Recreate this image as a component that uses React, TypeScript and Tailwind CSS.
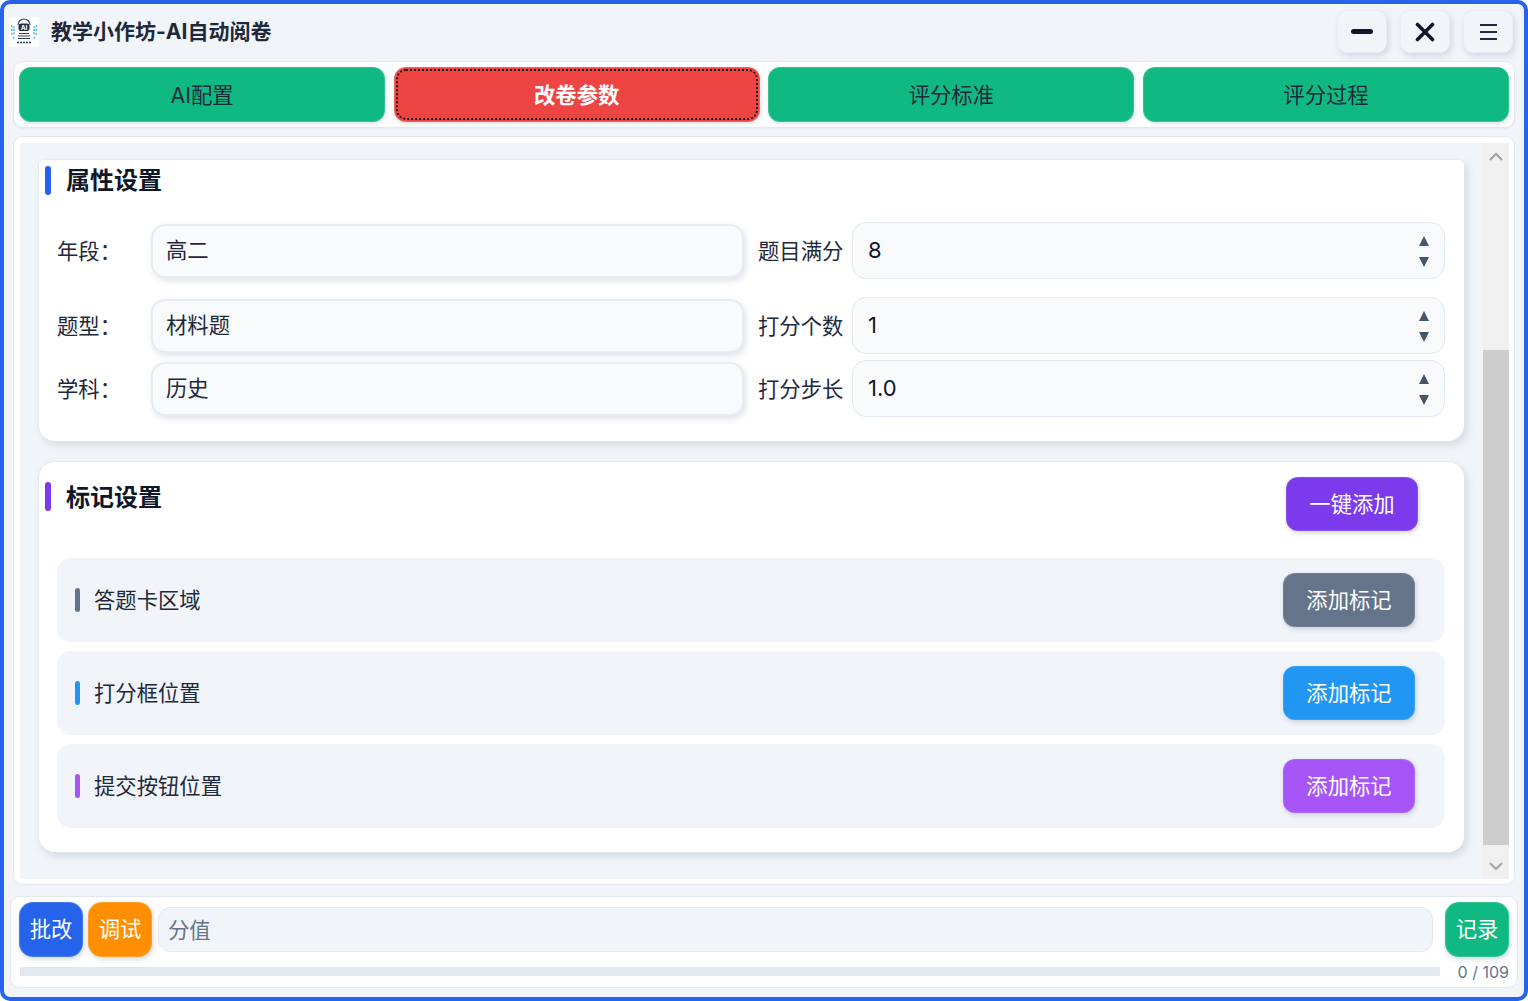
import React from "react";

const font = { fontFamily: 'Inter, "Noto Sans CJK SC", sans-serif' };

function Logo() {
  return (
    <svg width="30" height="30" viewBox="0 0 30 30" className="shrink-0 bg-white">
      <path d="M9 8a6 6 0 0 1 12 0" fill="none" stroke="#334766" strokeWidth="1.2" />
      <rect x="9.5" y="6.5" width="11" height="7.5" rx="2.5" fill="#1e2f4d" />
      <text x="15" y="12.6" textAnchor="middle" fontSize="6.5" fontWeight="700" fill="#fff" fontFamily="Inter">AI</text>
      <path d="M10 16.5h10M9 19h12M9 21.5h12" stroke="#2b3f60" strokeWidth="1.2" />
      <path d="M8 25.5h14" stroke="#2b3f60" strokeWidth="1.4" strokeDasharray="2 1" />
      <path d="M2 9l4 2M2 13h4M2 17l4-1M28 9l-4 2M28 13h-4M28 17l-4-1M4 21l2-1M26 21l-2-1" stroke="#39b7ee" strokeWidth="1.8" strokeDasharray="1.5 0.8" />
    </svg>
  );
}

function TopButton({ children }: { children: React.ReactNode }) {
  return (
    <div className="flex h-[43px] w-[50px] items-center justify-center rounded-[10px] border border-[#e8edf4] bg-[#f1f5f9] shadow-[2px_3px_6px_rgba(100,116,139,0.22)]">
      {children}
    </div>
  );
}

function Tab({ label, active }: { label: string; active?: boolean }) {
  return active ? (
    <div className="flex h-[55px] items-center justify-center rounded-[12px] border border-white/15 bg-[#ef4444] pt-[2px] text-[21.33px] font-bold text-white outline-2 -outline-offset-4 outline-dotted outline-[#1c1010] shadow-[1px_2px_4px_rgba(100,116,139,0.2)]">
      {label}
    </div>
  ) : (
    <div className="flex h-[55px] items-center justify-center rounded-[12px] border border-white/15 bg-[#10b981] pt-[2px] text-[21.33px] text-[#1e293b] shadow-[1px_2px_4px_rgba(100,116,139,0.2)]">
      {label}
    </div>
  );
}

function Spin() {
  return (
    <svg width="12" height="33" viewBox="0 0 12 33" className="mr-[14px] mt-[1px] shrink-0">
      <path d="M1 11 L6 1 L11 11Z M1 22 L11 22 L6 32Z" fill="#475569" />
    </svg>
  );
}

function Field({ label, value, numLabel, num, top }: { label: string; value: string; numLabel: string; num: string; top: string }) {
  return (
    <div className={`flex items-center ${top}`}>
      <div className="w-[94px] shrink-0 pt-[2px] text-[21.33px] text-[#1e293b]">{label}：</div>
      <div className="flex h-[54px] w-[593px] shrink-0 items-center rounded-[14px] border-2 border-[#e7ecf3] bg-[#f8fafc] pl-[13px] text-[21.33px] text-[#1e293b] shadow-[2px_3px_6px_rgba(100,116,139,0.2)]">
        {value}
      </div>
      <div className="ml-[14px] w-[94px] shrink-0 pt-[2px] text-[21.33px] text-[#1e293b]">{numLabel}</div>
      <div className="flex h-[57px] flex-1 items-center justify-between rounded-[14px] border border-[#e2e8f0] bg-[#f8fafc] pl-[15px] text-[22px] text-[#0f172a]">
        <span>{num}</span>
        <Spin />
      </div>
    </div>
  );
}

function MarkRow({ label, bar, btn }: { label: string; bar: string; btn: string }) {
  return (
    <div className="flex h-[84px] items-center rounded-[14px] bg-[#f1f5f9] pl-[18px] pr-[30px]">
      <div className={`h-[24px] w-[5px] rounded-full ${bar}`} />
      <div className="ml-[14px] flex-1 pt-[2px] text-[21.33px] text-[#1e293b]">{label}</div>
      <div className={`flex h-[54px] w-[132px] items-center justify-center rounded-[12px] border border-white/10 pt-[2px] text-[21.33px] text-white shadow-[1px_2px_5px_rgba(100,116,139,0.3)] ${btn}`}>
        添加标记
      </div>
    </div>
  );
}

const cardShadow = "shadow-[0_0_0_1px_rgba(226,232,240,0.6),3px_4px_8px_rgba(100,116,139,0.22)]";

export default function App() {
  return (
    <div style={font} className="flex h-[1001px] w-[1528px] flex-col overflow-hidden rounded-[10px] border-4 border-[#2563eb] bg-[#f1f5f9]">
      {/* title bar */}
      <div className="flex h-[57px] shrink-0 items-center pb-[2px] pl-[5px] pr-[11px]">
        <Logo />
        <div className="ml-[12px] flex-1 text-[21px] font-bold text-[#1e293b]">教学小作坊-AI自动阅卷</div>
        <div className="flex gap-[13px]">
          <TopButton>
            <div className="h-[5px] w-[22px] rounded-full bg-[#0f172a]" />
          </TopButton>
          <TopButton>
            <svg width="20" height="20" viewBox="0 0 20 20">
              <path d="M2.5 2.5 L17.5 17.5 M17.5 2.5 L2.5 17.5" stroke="#0f172a" strokeWidth="3.6" strokeLinecap="round" />
            </svg>
          </TopButton>
          <TopButton>
            <div className="flex w-[17px] flex-col gap-[5px]">
              <div className="h-[2px] bg-[#1e293b]" />
              <div className="h-[2px] bg-[#1e293b]" />
              <div className="h-[2px] bg-[#1e293b]" />
            </div>
          </TopButton>
        </div>
      </div>

      {/* tabs */}
      <div className="mx-[9px] grid h-[67px] shrink-0 grid-cols-4 gap-[8.67px] rounded-[10px] border border-[#e2e8f0] bg-white p-[5px] shadow-[0_1px_2px_rgba(100,116,139,0.08)]">
        <Tab label="AI配置" />
        <Tab label="改卷参数" active />
        <Tab label="评分标准" />
        <Tab label="评分过程" />
      </div>

      {/* content */}
      <div className="mx-[9px] mt-[8px] h-[749px] shrink-0 rounded-[10px] border border-[#e2e8f0] bg-white pb-[5px] pl-[6px] pr-[5px] pt-[6px]">
        <div className="flex h-full bg-[#f1f5f9]">
          <div className="flex-1 overflow-hidden pl-[19px] pr-[19px] pt-[17px]">
            <div className={`rounded-b-[16px] rounded-t-[5px] bg-white pb-[24px] pl-[6px] pr-[19px] pt-[6px] ${cardShadow}`}>
              <div className="flex h-[29px] items-center">
                <div className="h-[29px] w-[6px] rounded-full bg-[#2563eb]" />
                <div className="ml-[15px] text-[24px] font-bold text-[#0f172a]">属性设置</div>
              </div>
              <div className="pl-[12px]">
                <Field label="年段" value="高二" numLabel="题目满分" num="8" top="mt-[27px]" />
                <Field label="题型" value="材料题" numLabel="打分个数" num="1" top="mt-[18px]" />
                <Field label="学科" value="历史" numLabel="打分步长" num="1.0" top="mt-[6px]" />
              </div>
            </div>

            <div className={`mt-[21px] rounded-[16px] bg-white pb-[24px] pl-[6px] pr-[19px] pt-[15px] ${cardShadow}`}>
              <div className="flex items-start justify-between pr-[27px]">
                <div className="mt-[5px] flex h-[29px] items-center">
                  <div className="h-[29px] w-[6px] rounded-full bg-[#7c3aed]" />
                  <div className="ml-[15px] mt-[2px] text-[24px] font-bold text-[#0f172a]">标记设置</div>
                </div>
                <div className="flex h-[54px] w-[132px] items-center justify-center rounded-[12px] border border-white/10 bg-[#7c3aed] pt-[2px] text-[21.33px] text-white shadow-[1px_2px_5px_rgba(100,116,139,0.3)]">
                  一键添加
                </div>
              </div>
              <div className="mt-[27px] flex flex-col gap-[9px] pl-[12px]">
                <MarkRow label="答题卡区域" bar="bg-[#64748b]" btn="bg-[#64748b]" />
                <MarkRow label="打分框位置" bar="bg-[#2196f3]" btn="bg-[#2196f3]" />
                <MarkRow label="提交按钮位置" bar="bg-[#a855f7]" btn="bg-[#a855f7]" />
              </div>
            </div>
          </div>

          {/* scrollbar */}
          <div className="flex w-[26px] shrink-0 flex-col bg-[#f0f0f0]">
            <div className="flex h-[207px] justify-center pt-[9px]">
              <svg width="14" height="9" viewBox="0 0 14 9"><path d="M1 8 L7 2 L13 8" fill="none" stroke="#a3a3a3" strokeWidth="2" /></svg>
            </div>
            <div className="h-[495px] bg-[#cdcdcd]" />
            <div className="flex flex-1 justify-center pt-[17px]">
              <svg width="14" height="9" viewBox="0 0 14 9"><path d="M1 1 L7 7 L13 1" fill="none" stroke="#a3a3a3" strokeWidth="2" /></svg>
            </div>
          </div>
        </div>
      </div>

      {/* bottom */}
      <div className="mx-[6px] mt-[11px] h-[92px] shrink-0 rounded-[10px] border border-[#e2e8f0] bg-white px-[8px] pt-[5px]">
        <div className="flex items-center">
          <div className="flex h-[55px] w-[64px] items-center justify-center rounded-[14px] border border-white/15 bg-[#2563eb] text-[21.33px] text-white shadow-[1px_2px_5px_rgba(100,116,139,0.3)]">批改</div>
          <div className="ml-[5px] flex h-[55px] w-[64px] items-center justify-center rounded-[14px] border border-white/15 bg-[#ff8f00] text-[21.33px] text-white shadow-[1px_2px_5px_rgba(100,116,139,0.3)]">调试</div>
          <div className="ml-[6px] flex h-[45px] flex-1 items-center rounded-[12px] border border-[#e2e8f0] bg-[#f1f5f9] pl-[9px] pt-[2px] text-[21.33px] text-[#64748b]">分值</div>
          <div className="ml-[12px] flex h-[55px] w-[64px] items-center justify-center rounded-[14px] border border-white/15 bg-[#10b981] text-[21.33px] text-white shadow-[1px_2px_5px_rgba(100,116,139,0.3)]">记录</div>
        </div>
        <div className="mt-[5px] flex items-start">
          <div className="ml-px mt-[5px] h-[9px] w-[1420px] bg-[#e2e8f0]" />
          <div className="ml-auto text-[16px] leading-[20px] text-[#64748b]">0 / 109</div>
        </div>
      </div>
    </div>
  );
}
